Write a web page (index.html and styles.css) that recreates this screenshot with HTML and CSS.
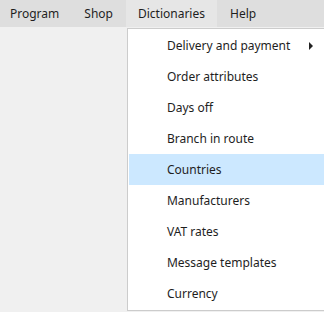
FILE: index.html
```html
<!DOCTYPE html>
<html>
<head>
<meta charset="utf-8">
<link rel="stylesheet" href="styles.css">
</head>
<body>
<div class="menubar">
  <div class="top">Program</div>
  <div class="top">Shop</div>
  <div class="top open">Dictionaries
    <div class="dropdown">
      <div class="item">Delivery and payment<span class="arrow"></span></div>
      <div class="item">Order attributes</div>
      <div class="item">Days off</div>
      <div class="item">Branch in route</div>
      <div class="item hover">Countries</div>
      <div class="item">Manufacturers</div>
      <div class="item">VAT rates</div>
      <div class="item">Message templates</div>
      <div class="item">Currency</div>
    </div>
  </div>
  <div class="top">Help</div>
</div>
</body>
</html>
```
FILE: styles.css
```css
html, body {
  margin: 0;
  padding: 0;
  background: #f0f0f0;
  width: 324px;
  height: 312px;
  overflow: hidden;
  font-family: "Noto Sans", "Open Sans", sans-serif;
  font-size: 12px;
  color: #1e1e1e;
}
.menubar {
  display: flex;
  height: 27px;
  background: #dedede;
  align-items: stretch;
  gap: 1px;
  margin-left: -2px;
}
.top {
  position: relative;
  display: flex;
  align-items: center;
  padding: 0 12px;
  white-space: nowrap;
}
.top.open {
  background: #e6e6e6;
}
.dropdown {
  position: absolute;
  left: 1px;
  top: 28px;
  width: 195px;
  background: #fff;
  border: 1px solid #cccccc;
  border-right: none;
  padding: 1px 0 1px 1px;
  z-index: 2;
}
.item {
  height: 31px;
  display: flex;
  align-items: center;
  padding-left: 38px;
  position: relative;
}
.item.hover {
  background: #cce8ff;
}
.arrow {
  position: absolute;
  left: 180px;
  top: 12px;
  width: 0;
  height: 0;
  border-left: 4px solid #222;
  border-top: 4px solid transparent;
  border-bottom: 4px solid transparent;
}
```
